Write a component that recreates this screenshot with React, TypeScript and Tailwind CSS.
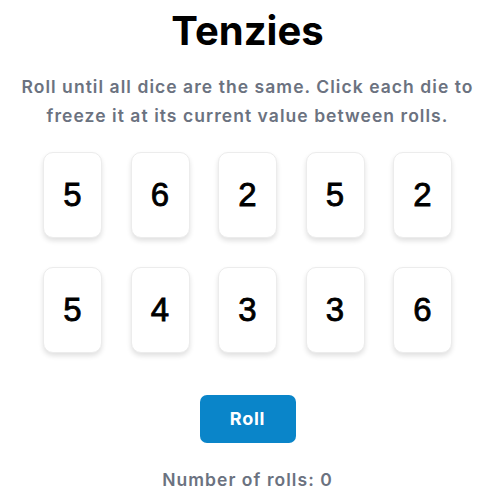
import { useState } from "react";

const initial = [5, 6, 2, 5, 2, 5, 4, 3, 3, 6];

function Die({ value }: { value: number }) {
  return (
    <button className="w-[59px] h-[86px] rounded-[10px] bg-white border border-[#ececec] shadow-[0_3px_5px_rgba(0,0,0,0.12)] flex items-center justify-center text-[33px] text-black font-['Liberation_Sans',Arial,sans-serif] [-webkit-text-stroke:0.8px_black]">
      {value}
    </button>
  );
}

export default function App() {
  const [dice] = useState(initial);
  const [rolls] = useState(0);

  return (
    <main className="w-[495px] h-[493px] bg-white flex flex-col items-center font-['Inter',sans-serif]">
      <h1 className="mt-[7px] text-[40px] leading-[48px] font-bold text-black">Tenzies</h1>
      <p className="mt-[17px] w-[480px] text-center text-[17.5px] leading-[29px] font-semibold tracking-[0.06em] text-[#6b7280]">
        Roll until all dice are the same. Click each die to freeze it at its current value between rolls.
      </p>
      <div className="mt-[22px] grid grid-cols-5 gap-x-[28.5px] gap-y-[29px]">
        {dice.map((d, i) => (
          <Die key={i} value={d} />
        ))}
      </div>
      <button className="mt-[42px] w-[96px] h-[49px] rounded-[7px] bg-[#0a85c9] text-white text-[18px] font-bold tracking-[0.04em]">
        Roll
      </button>
      <p className="mt-[24px] text-[17.5px] font-semibold tracking-[0.06em] text-[#6b7280]">Number of rolls: {rolls}</p>
    </main>
  );
}
